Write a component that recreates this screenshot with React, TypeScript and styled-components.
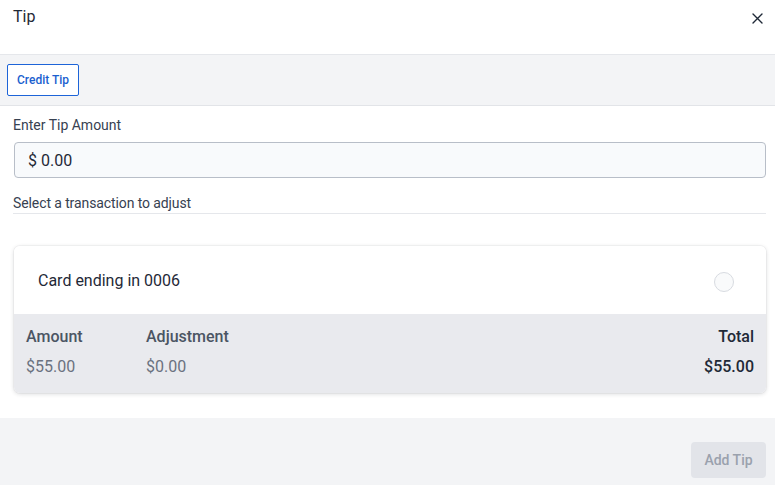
import styled, { createGlobalStyle } from "styled-components";

const GlobalStyle = createGlobalStyle`
  html, body {
    margin: 0;
    padding: 0;
    background: #ffffff;
  }
  body {
    font-family: Roboto, "Liberation Sans", Arial, sans-serif;
    color: #1f2937;
  }
  * {
    box-sizing: border-box;
  }
`;

const Dialog = styled.div`
  width: 775px;
  height: 485px;
  display: flex;
  flex-direction: column;
  background: #ffffff;
  overflow: hidden;
`;

const Header = styled.div`
  height: 55px;
  display: flex;
  justify-content: space-between;
  align-items: flex-start;
  padding: 5px 12px 0 13px;
  border-bottom: 1px solid #e5e7eb;
`;

const Title = styled.div`
  font-size: 16px;
  line-height: 24px;
  color: #1f2937;
`;

const CloseButton = styled.button`
  border: none;
  background: none;
  padding: 0;
  margin-top: 8px;
  width: 11px;
  height: 11px;
  display: flex;
  cursor: pointer;
`;

const TabBar = styled.div`
  height: 52px;
  display: flex;
  align-items: center;
  padding: 0 7px;
  background: #f3f4f6;
  border-bottom: 1px solid #e2e4e8;
`;

const TabButton = styled.button<{ $active?: boolean }>`
  height: 32px;
  padding: 0 9px;
  font-family: inherit;
  font-size: 12px;
  font-weight: 500;
  color: ${(p) => (p.$active ? "#1b5fcf" : "#6b7280")};
  background: #ffffff;
  border: 1px solid ${(p) => (p.$active ? "#1d64d8" : "#d1d5db")};
  border-radius: 2px;
  margin-top: 1px;
`;

const Body = styled.div`
  flex: 1;
  display: flex;
  flex-direction: column;
  padding: 9px 9px 0 13px;
`;

const FieldLabel = styled.label`
  font-size: 14px;
  line-height: 20px;
  color: #374151;
`;

const AmountInput = styled.div`
  margin: 7px 0 0 1px;
  height: 36px;
  display: flex;
  align-items: center;
  padding: 0 13px;
  font-size: 16px;
  color: #1f2937;
  background: #f8fafc;
  border: 1px solid #b8bec8;
  border-radius: 4px;
`;

const SectionLabel = styled.div`
  margin-top: 15px;
  font-size: 14px;
  line-height: 20px;
  letter-spacing: -0.1px;
  color: #374151;
  border-bottom: 1px solid #e5e7eb;
`;

const Card = styled.div`
  margin: 32px 0 0 1px;
  border-radius: 6px;
  overflow: hidden;
  box-shadow: 0 1px 4px rgba(17, 24, 39, 0.16), 0 0 0 1px rgba(17, 24, 39, 0.03);
`;

const CardTop = styled.div`
  height: 68px;
  display: flex;
  align-items: center;
  justify-content: space-between;
  padding: 0 32px 0 24px;
  background: #ffffff;
  font-size: 16px;
  color: #1f2937;
`;

const Radio = styled.span`
  width: 20px;
  height: 20px;
  border-radius: 50%;
  border: 1px solid #d8dbe1;
  background: #f9fafb;
  margin-top: 3px;
`;

const CardBottom = styled.div`
  height: 79px;
  display: grid;
  grid-template-columns: 120px 1fr auto;
  padding: 13px 12px 0 12px;
  background: #e9eaee;
`;

const Column = styled.div<{ $align?: "left" | "right" }>`
  display: flex;
  flex-direction: column;
  align-items: ${(p) => (p.$align === "right" ? "flex-end" : "flex-start")};
`;

const ColumnHead = styled.div<{ $strong?: boolean }>`
  font-size: 16px;
  line-height: 20px;
  font-weight: 500;
  color: ${(p) => (p.$strong ? "#1f2937" : "#4b5563")};
`;

const ColumnValue = styled.div<{ $strong?: boolean }>`
  margin-top: 10px;
  font-size: 16px;
  line-height: 20px;
  font-weight: ${(p) => (p.$strong ? 500 : 400)};
  color: ${(p) => (p.$strong ? "#1f2937" : "#6b7280")};
`;

const Footer = styled.div`
  margin-top: 25px;
  height: 67px;
  display: flex;
  justify-content: flex-end;
  align-items: flex-start;
  padding: 24px 9px 0 0;
  background: #f3f4f6;
`;

const PrimaryButton = styled.button`
  width: 75px;
  height: 36px;
  border: none;
  border-radius: 4px;
  font-family: inherit;
  font-size: 14px;
  font-weight: 500;
  color: #9aa1ad;
  background: #e2e4e9;
`;

interface SummaryColumn {
  label: string;
  value: string;
  align?: "left" | "right";
  strong?: boolean;
}

const columns: SummaryColumn[] = [
  { label: "Amount", value: "$55.00" },
  { label: "Adjustment", value: "$0.00" },
  { label: "Total", value: "$55.00", align: "right", strong: true },
];

const App = () => {
  return (
    <>
      <GlobalStyle />
      <Dialog>
        <Header>
          <Title>Tip</Title>
          <CloseButton aria-label="Close">
            <svg width="11" height="11" viewBox="0 0 11 11">
              <path d="M1 1 L10 10 M10 1 L1 10" stroke="#1f2937" strokeWidth="1.4" strokeLinecap="round" />
            </svg>
          </CloseButton>
        </Header>
        <TabBar>
          <TabButton $active>Credit Tip</TabButton>
        </TabBar>
        <Body>
          <FieldLabel>Enter Tip Amount</FieldLabel>
          <AmountInput>$ 0.00</AmountInput>
          <SectionLabel>Select a transaction to adjust</SectionLabel>
          <Card>
            <CardTop>
              <span>Card ending in 0006</span>
              <Radio />
            </CardTop>
            <CardBottom>
              {columns.map((c) => (
                <Column key={c.label} $align={c.align}>
                  <ColumnHead $strong={c.strong}>{c.label}</ColumnHead>
                  <ColumnValue $strong={c.strong}>{c.value}</ColumnValue>
                </Column>
              ))}
            </CardBottom>
          </Card>
        </Body>
        <Footer>
          <PrimaryButton disabled>Add Tip</PrimaryButton>
        </Footer>
      </Dialog>
    </>
  );
};

export default App;
